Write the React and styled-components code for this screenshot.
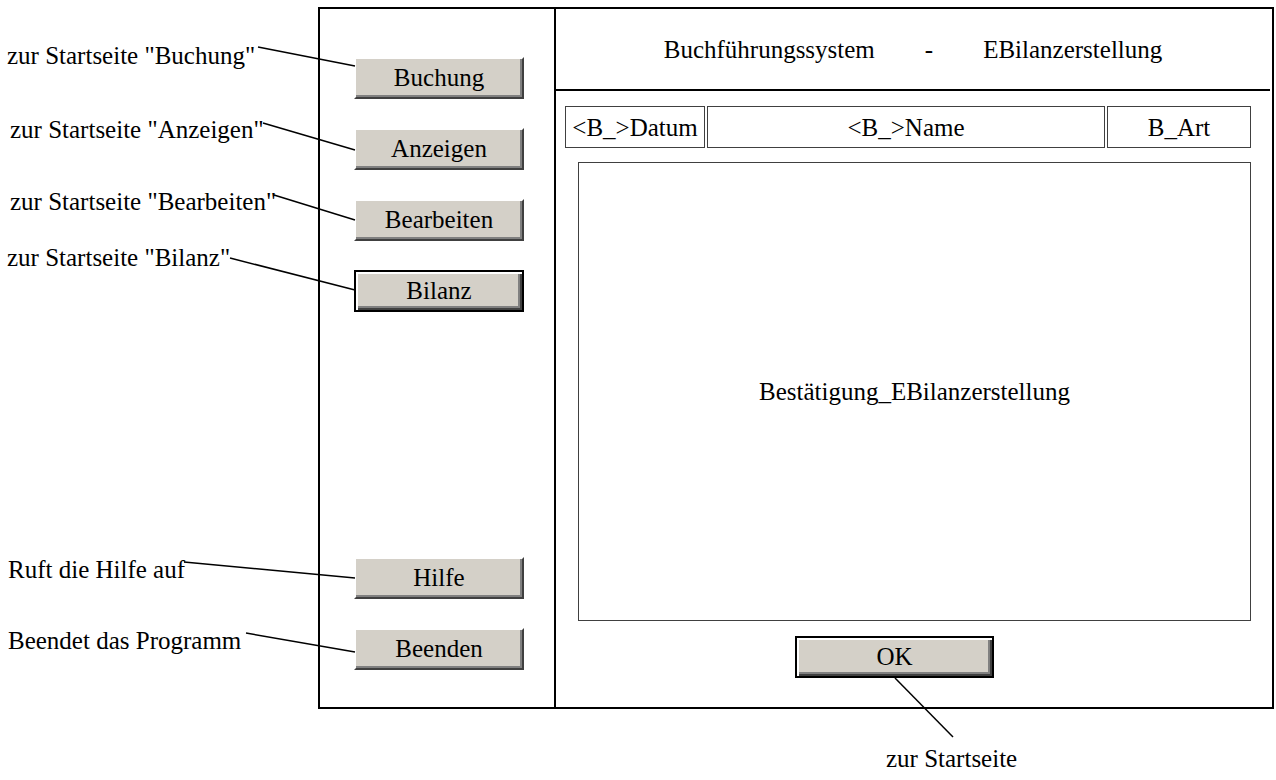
import React from "react";
import styled, { createGlobalStyle } from "styled-components";

const GlobalStyle = createGlobalStyle`
  html, body {
    margin: 0;
    padding: 0;
    background: #fff;
  }
  body {
    font-family: "Liberation Serif", "Times New Roman", serif;
    color: #000;
  }
`;

const notes = [
  { text: 'zur Startseite "Buchung"', gap: 34, indent: 7 },
  { text: 'zur Startseite "Anzeigen"', gap: 45, indent: 10 },
  { text: 'zur Startseite "Bearbeiten"', gap: 43, indent: 10 },
  { text: 'zur Startseite "Bilanz"', gap: 27, indent: 7 },
  { text: "Ruft die Hilfe auf", gap: 283, indent: 8 },
  { text: "Beendet das Programm", gap: 42, indent: 8 },
];

// leader lines from the notes to the buttons
const leaders = [
  [258, 47, 355, 66],
  [263, 123, 355, 150],
  [274, 195, 355, 220],
  [230, 258, 355, 290],
  [184, 562, 355, 578],
  [246, 633, 355, 652],
  [895, 678, 953, 737],
];

const App = () => {
  return (
    <>
      <GlobalStyle />
      <Page>
        <Notes>
          {notes.map((n) => (
            <Note key={n.text} $gap={n.gap} $indent={n.indent}>
              {n.text}
            </Note>
          ))}
        </Notes>
        <Frame>
          <SidePanel>
            <NavButton>Buchung</NavButton>
            <NavButton>Anzeigen</NavButton>
            <NavButton>Bearbeiten</NavButton>
            <NavButton $primary>Bilanz</NavButton>
            <NavButton $push>Hilfe</NavButton>
            <NavButton>Beenden</NavButton>
          </SidePanel>
          <MainPanel>
            <Header>
              <span>Buchführungssystem</span>
              <span>-</span>
              <span>EBilanzerstellung</span>
            </Header>
            <Columns>
              <Cell $w={140}>&lt;B_&gt;Datum</Cell>
              <Cell $w={398}>&lt;B_&gt;Name</Cell>
              <Cell $w={144}>B_Art</Cell>
            </Columns>
            <Content>Bestätigung_EBilanzerstellung</Content>
            <OkButton $primary>OK</OkButton>
          </MainPanel>
        </Frame>
        <Caption>zur Startseite</Caption>
        <Leaders width="1276" height="780" viewBox="0 0 1276 780">
          {leaders.map(([x1, y1, x2, y2], i) => (
            <line key={i} x1={x1} y1={y1} x2={x2} y2={y2} stroke="#000" strokeWidth="1.5" />
          ))}
        </Leaders>
      </Page>
    </>
  );
};

const Page = styled.div`
  position: relative;
  width: 1276px;
  height: 780px;
  box-sizing: border-box;
  padding-top: 7px;
  display: grid;
  grid-template-columns: 318px 956px;
  grid-template-rows: 702px auto;
  font-size: 25px;
  line-height: 29px;
  overflow: hidden;
`;

const Notes = styled.div`
  grid-row: 1 / span 2;
  display: flex;
  flex-direction: column;
`;

const Note = styled.div`
  margin-top: ${(p) => p.$gap}px;
  padding-left: ${(p) => p.$indent}px;
  white-space: nowrap;
`;

const Frame = styled.div`
  box-sizing: border-box;
  border: 2px solid #000;
  display: grid;
  grid-template-columns: 236px 714px;
`;

const SidePanel = styled.div`
  border-right: 2px solid #000;
  display: flex;
  flex-direction: column;
  gap: 29px;
  padding: 48px 0 37px 34px;
`;

const NavButton = styled.button`
  width: 170px;
  height: 42px;
  box-sizing: border-box;
  padding: 0;
  margin-top: ${(p) => (p.$push ? "auto" : "0")};
  font-family: "Liberation Serif", "Times New Roman", serif;
  font-size: 25px;
  color: #000;
  background: #d4d0c8;
  border-style: solid;
  border-width: 2px;
  border-color: ${(p) => (p.$primary ? "#000" : "#fff #404040 #404040 #fff")};
  box-shadow: ${(p) =>
    p.$primary
      ? "inset 2px 2px 0 #fff, inset -2px -2px 0 #404040, inset -4px -4px 0 #808080"
      : "inset -2px -2px 0 #808080"};
`;

const OkButton = styled(NavButton)`
  width: 199px;
  margin: 15px 0 0 239px;
`;

const MainPanel = styled.div`
  display: flex;
  flex-direction: column;
`;

const Header = styled.div`
  height: 80px;
  border-bottom: 2px solid #000;
  display: flex;
  align-items: center;
  justify-content: center;
  gap: 50px;
`;

const Columns = styled.div`
  display: flex;
  gap: 2px;
  margin: 15px 0 0 9px;
`;

const Cell = styled.div`
  width: ${(p) => p.$w}px;
  height: 42px;
  box-sizing: border-box;
  border: 1px solid #404040;
  display: flex;
  align-items: center;
  justify-content: center;
  white-space: nowrap;
`;

const Content = styled.div`
  margin: 14px 19px 0 22px;
  height: 459px;
  box-sizing: border-box;
  border: 1px solid #404040;
  display: flex;
  align-items: center;
  justify-content: center;
`;

const Caption = styled.div`
  grid-column: 2;
  margin: 35px 0 0 568px;
  white-space: nowrap;
`;

const Leaders = styled.svg`
  position: absolute;
  left: 0;
  top: 0;
  pointer-events: none;
`;

export default App;
